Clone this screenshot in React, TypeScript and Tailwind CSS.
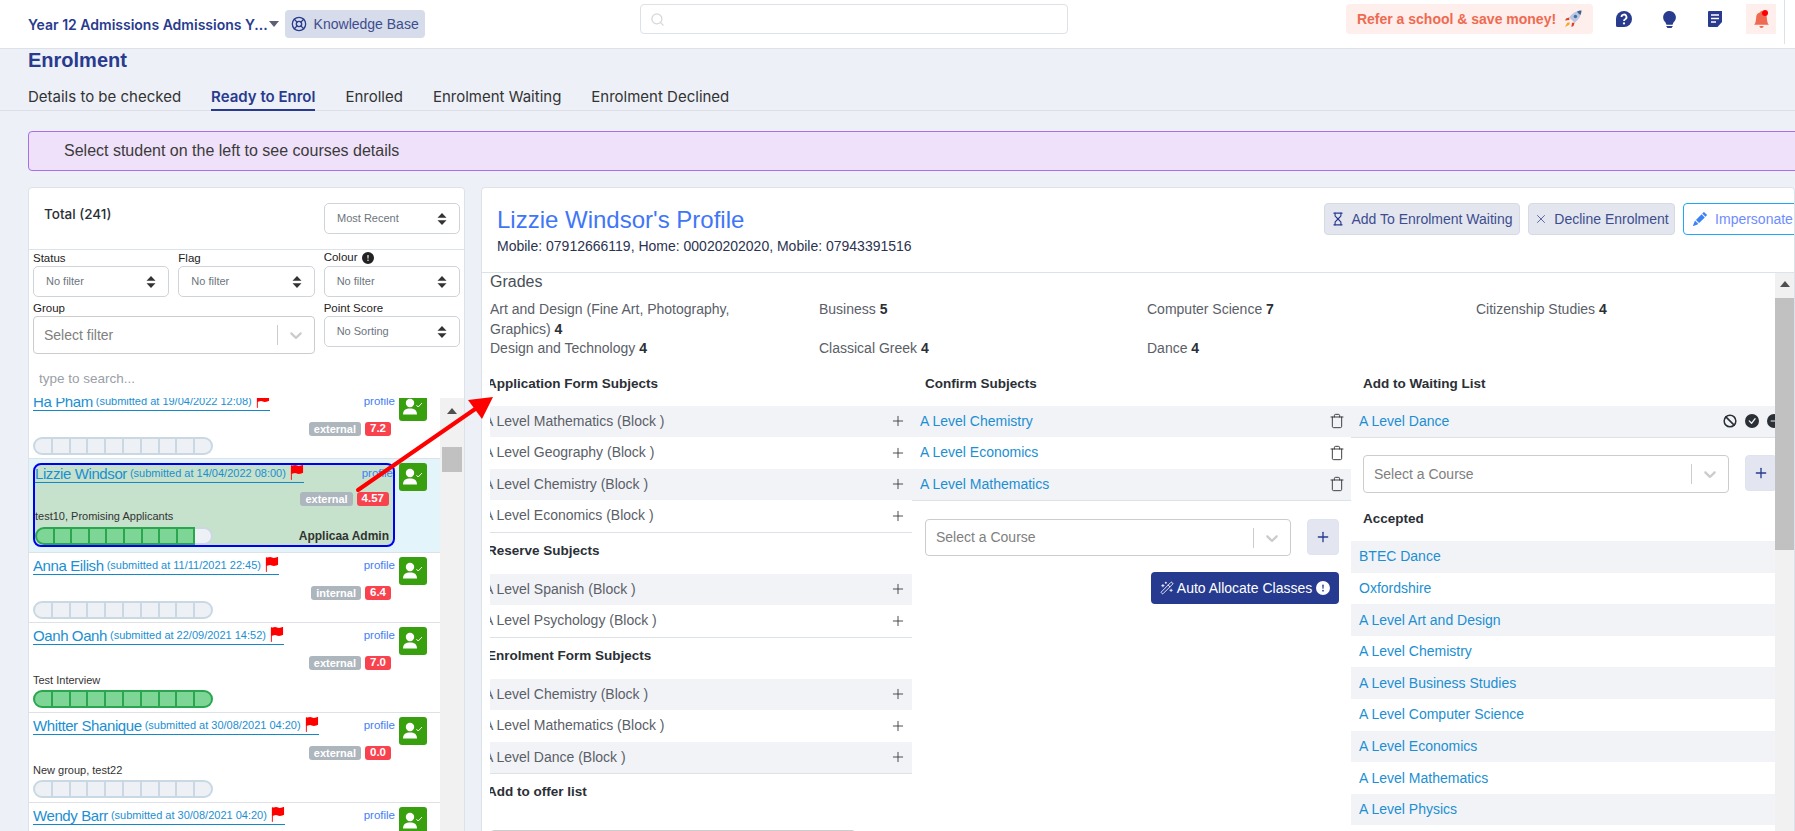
import { Ban, LifeBuoy, Plus, Search, Trash, X, Hourglass, WandSparkles } from "lucide-react";
import { BsBellFill, BsCheckCircleFill, BsDashCircleFill, BsExclamationCircleFill, BsFlagFill, BsLightbulbFill, BsPencilFill } from "react-icons/bs";

const tabs = ["Details to be checked", "Ready to Enrol", "Enrolled", "Enrolment Waiting", "Enrolment Declined"];

const students = [
  { name: "Ha Pham", date: "19/04/2022 12:08", type: "external", score: "7.2", group: "", filled: 0 },
  { name: "Lizzie Windsor", date: "14/04/2022 08:00", type: "external", score: "4.57", group: "test10, Promising Applicants", filled: 9, selected: true },
  { name: "Anna Eilish", date: "11/11/2021 22:45", type: "internal", score: "6.4", group: "", filled: 0 },
  { name: "Oanh Oanh", date: "22/09/2021 14:52", type: "external", score: "7.0", group: "Test Interview", filled: 10 },
  { name: "Whitter Shanique", date: "30/08/2021 04:20", type: "external", score: "0.0", group: "New group, test22", filled: 0 },
  { name: "Wendy Barr", date: "30/08/2021 04:20", type: "external", score: "5.1", group: "", filled: 0 },
];

const grades = [
  ["Art and Design (Fine Art, Photography, Graphics)", "4"],
  ["Business", "5"],
  ["Computer Science", "7"],
  ["Citizenship Studies", "4"],
  ["Design and Technology", "4"],
  ["Classical Greek", "4"],
  ["Dance", "4"],
];

const accepted = [
  "BTEC Dance",
  "Oxfordshire",
  "A Level Art and Design",
  "A Level Chemistry",
  "A Level Business Studies",
  "A Level Computer Science",
  "A Level Economics",
  "A Level Mathematics",
  "A Level Physics",
];

const SortIcon = () => (
  <svg width="10" height="12" viewBox="0 0 10 12" className="shrink-0 fill-[#333]">
    <path d="M5 0 L9.5 4.8 H0.5 Z M5 12 L0.5 7.2 H9.5 Z" />
  </svg>
);

const Chevron = () => (
  <svg width="20" height="20" viewBox="0 0 20 20" className="fill-[#cccccc]">
    <path d="M4.516 7.548c0.436-0.446 1.043-0.481 1.576 0l3.908 3.747 3.908-3.747c0.533-0.481 1.141-0.446 1.574 0 0.436 0.445 0.408 1.197 0 1.615-0.406 0.418-4.695 4.502-4.695 4.502-0.217 0.223-0.502 0.335-0.787 0.335s-0.57-0.112-0.789-0.335c0 0-4.287-4.084-4.695-4.502s-0.436-1.17 0-1.615z" />
  </svg>
);

const SmallSelect = ({ label }: { label: string }) => (
  <div className="flex h-[31px] items-center justify-between rounded-[5px] border border-[#ced4da] bg-white pr-[12px] pl-[12px] text-[11px] text-[#6c757d]">
    {label}
    <SortIcon />
  </div>
);

const CourseSelect = ({ placeholder, className }: { placeholder: string; className: string }) => (
  <div className={`flex items-center rounded-[4px] border border-[#cccccc] bg-white pl-[10px] text-[#808080] ${className}`}>
    <span className="flex-1">{placeholder}</span>
    <span className="h-[20px] w-px bg-[#cccccc]" />
    <span className="flex w-[36px] justify-center">
      <Chevron />
    </span>
  </div>
);

const UserCheck = () => (
  <div className="flex h-[28px] w-[28px] shrink-0 items-center justify-center rounded-[3px] bg-[#38a00e]">
    <svg width="20" height="18" viewBox="0 0 20 18" className="fill-white">
      <circle cx="7" cy="5" r="4.2" />
      <path d="M0 16.5 C0 12 3 10.5 7 10.5 C11 10.5 14 12 14 16.5 Z" />
      <path d="M13.5 7.2 L15.2 9 L19 5" fill="none" stroke="white" strokeWidth="1" />
    </svg>
  </div>
);

const ProgressBar = ({ filled, compact }: { filled: number; compact?: boolean }) => (
  <div className={`flex h-[18px] shrink-0 ${compact ? "w-[178px]" : "w-[180px]"}`}>
    {Array.from({ length: 10 }).map((_, i) => (
      <div
        key={i}
        className={`flex-1 border-y-2 border-r-2 first:rounded-l-full first:border-l-2 last:rounded-r-full ${
          i < filled ? "border-[#2aa64f] bg-[#7dd695]" : "border-[#c9d8e3] bg-[#edf1f5]"
        }`}
      />
    ))}
  </div>
);

const StudentInfo = ({ s }: { s: (typeof students)[number] }) => (
  <>
    <div className="flex h-[18px] items-start justify-between">
      <span className="flex h-[18px] items-center gap-[3px] border-b border-[#1487c9] leading-[17px] whitespace-nowrap text-[#1b8fd2]">
        <span className="text-[15px] tracking-[-0.4px]">{s.name}</span>
        <span className="text-[11px]">(submitted at {s.date})</span>
        <BsFlagFill className="mb-[3px] text-[15px] text-[#ff0000]" />
      </span>
      <span className="text-[11.5px] leading-[16px] text-[#3f80f5]">profile</span>
    </div>
    <div className={`flex justify-end gap-[4px] pr-[4px] ${s.selected ? "mt-[9px]" : "mt-[11px]"}`}>
      <span className="flex h-[14px] items-center rounded-[3px] bg-[#adb5bd] px-[5px] text-[11px] font-bold text-white">{s.type}</span>
      <span className="flex h-[14px] items-center rounded-[3px] bg-[#f8434f] px-[5px] text-[11.5px] font-bold text-white">{s.score}</span>
    </div>
    {s.group && <div className="mt-[1px] flex h-[18px] items-center text-[11px] text-[#333]">{s.group}</div>}
  </>
);

const StudentRow = ({ s }: { s: (typeof students)[number] }) => {
  if (s.selected) {
    return (
      <div className="flex gap-[4px] border-b border-[#dee2e6] bg-[#e3f4fb] pt-[4px] pr-[13px] pb-[5px] pl-[4px]">
        <div className="flex-1 rounded-[8px] border-2 border-[#0000f0] bg-[#c6e2cc]">
          <StudentInfo s={s} />
          <div className="mt-[2px] flex items-center justify-between pr-[4px]">
            <ProgressBar filled={s.filled} compact />
            <span className="text-[12px] font-bold text-[#333]">Applicaa Admin</span>
          </div>
        </div>
        <UserCheck />
      </div>
    );
  }
  return (
    <div className={`flex gap-[4px] border-b border-[#dee2e6] pt-[4px] pr-[13px] pl-[4px] ${s.group ? "pb-[4px]" : "pb-[3px]"}`}>
      <div className="flex-1">
        <StudentInfo s={s} />
        <div className="mt-[1px]">
          <ProgressBar filled={s.filled} />
        </div>
      </div>
      <UserCheck />
    </div>
  );
};

const SubjectRow = ({ name, odd }: { name: string; odd: boolean }) => (
  <div className={`flex h-[31.5px] items-center justify-between pr-[6px] text-[14px] text-[#5a6068] ${odd ? "bg-[#f2f3f7]" : "bg-white"}`}>
    <span className="-ml-[6px]">{name}</span>
    <Plus size={16} strokeWidth={1.3} className="text-[#333]" />
  </div>
);

const LinkRow = ({ name, odd, children }: { name: string; odd: boolean; children?: React.ReactNode }) => (
  <div className={`flex h-[31.6px] items-center justify-between pr-[6px] pl-[8px] text-[14px] text-[#1b8fd2] ${odd ? "bg-[#f2f3f7]" : "bg-white"}`}>
    <span>{name}</span>
    {children}
  </div>
);

const Heading = ({ children, className }: { children: string; className?: string }) => (
  <div className={`h-[41px] pt-[8px] text-[13.5px] leading-[20px] font-bold text-[#2b2f36] ${className ?? ""}`}>{children}</div>
);

const PlusButton = () => (
  <div className="flex h-[36px] w-[32px] shrink-0 items-center justify-center rounded-[4px] border border-[#dfe3ee] bg-[#e3e6f0] text-[#283b8e]">
    <Plus size={16} strokeWidth={2} />
  </div>
);

export default function App() {
  return (
    <div className="relative h-[831px] w-[1795px] overflow-hidden bg-[#edf0f7] font-['Liberation_Sans',sans-serif]">
      {/* Top Bar */}
      <header className="flex h-[49px] items-start border-b border-[#dde1e8] bg-white">
        <div className="flex h-[48px] w-[640px] items-center pl-[28px]">
          <span className="font-['Inter',sans-serif] text-[14px] font-semibold text-[#283b8e]">Year 12 Admissions Admissions Y...</span>
          <span className="mr-[6px] ml-[1px] h-0 w-0 border-x-[5px] border-t-[6px] border-x-transparent border-t-[#5b6175]" />
          <div className="flex h-[28px] items-center gap-[7px] rounded-[4px] bg-[#d6dce9] px-[6px] text-[14px] text-[#3d4d8f]">
            <LifeBuoy size={16} className="text-[#283b8e]" />
            Knowledge Base
          </div>
        </div>
        <div className="mt-[4px] flex h-[30px] w-[428px] items-center rounded-[4px] border border-[#dde1e8] pl-[9px]">
          <Search size={15} className="text-[#d3d6db]" />
        </div>
        <div className="mt-[4px] ml-[278px] flex h-[30px] w-[247px] items-center justify-center gap-[8px] rounded-[4px] bg-[#feeeec] text-[14px] font-bold text-[#ee6a50]">
          Refer a school &amp; save money!
          <svg width="18" height="18" viewBox="0 0 17 17">
            <path d="M16.5 0.5 C12 0.5 8 3 5 7 L10 12 C14 9 16.5 5 16.5 0.5 Z" fill="#b9c6de" />
            <path d="M16.5 0.5 C15 0.5 13.5 0.9 12.2 1.6 L15.4 4.8 C16.1 3.5 16.5 2 16.5 0.5 Z" fill="#3f5f8f" />
            <circle cx="10.8" cy="6.2" r="1.6" fill="#3f6fb0" />
            <path d="M5 7 L2 8 L1 10 L5 9.5 Z M10 12 L9 15 L7 16 L7.5 12 Z" fill="#d8402b" />
            <path d="M5.5 11.5 L1 16 L3 12 Z M5.5 11.5 L1 16 L5 14 Z" fill="#f5a623" />
          </svg>
        </div>
        <div className="mt-[4px] flex h-[30px] w-[46px] items-center justify-center pl-[16px] text-[#283b8e]">
          <svg width="16" height="16" viewBox="0 0 16 16">
            <path d="M8 0 A8 8 0 1 1 8 16 H1.5 Q0 16 0 14.5 V8 A8 8 0 0 1 8 0 Z" fill="#283b8e" />
            <path d="M5.5 6 A2.5 2.5 0 1 1 9.2 8.2 Q8 8.8 8 10" fill="none" stroke="white" strokeWidth="1.8" />
            <circle cx="8" cy="12.4" r="1.1" fill="white" />
          </svg>
        </div>
        <div className="mt-[4px] flex h-[30px] w-[46px] items-center justify-center pl-[14px] text-[#283b8e]">
          <BsLightbulbFill size={17} />
        </div>
        <div className="mt-[4px] flex h-[30px] w-[46px] items-center justify-center pl-[14px]">
          <svg width="14" height="16" viewBox="0 0 14 16">
            <path d="M1 0 H14 V11 L9.5 16 H1 Q0 16 0 15 V1 Q0 0 1 0 Z" fill="#283b8e" />
            <path d="M3 4 H11 M3 7.5 H11 M3 11 H8" stroke="white" strokeWidth="1.5" />
          </svg>
        </div>
        <div className="relative mt-[4px] ml-[15px] flex h-[30px] w-[30px] items-center justify-center bg-[#feeeec] text-[#ee6a50]">
          <BsBellFill size={17} />
          <span className="absolute top-[6px] left-[16px] h-[6px] w-[6px] rounded-full bg-[#ff0000]" />
        </div>
        <div className="ml-[8px] h-[44px] w-px bg-[#dde1e8]" />
      </header>

      {/* Title and tabs */}
      <h1 className="h-[23px] pl-[28px] text-[20px] leading-[23px] font-bold text-[#283b8e]">Enrolment</h1>
      <nav className="mt-[14px] flex h-[25px] gap-[30px] border-b border-[#dcdfe6] pl-[28px] font-['Inter',sans-serif] text-[15px] leading-[22px] text-[#333]">
        {tabs.map((tab) =>
          tab === "Ready to Enrol" ? (
            <span key={tab} className="h-[25px] border-b-2 border-[#283b8e] font-semibold text-[#283b8e]">{tab}</span>
          ) : (
            <span key={tab}>{tab}</span>
          ),
        )}
      </nav>

      {/* Notice */}
      <div className="mt-[20px] -mr-[10px] ml-[28px] flex h-[40px] items-center rounded-l-[4px] border border-[#a96ee8] bg-[#efe1fa] pl-[35px] text-[16px] text-[#3b3b3b]">
        Select student on the left to see courses details
      </div>

      <div className="mt-[16px] flex gap-[16px] pl-[28px]">
        {/* Left Card */}
        <aside className="h-[700px] w-[437px] shrink-0 overflow-hidden rounded-t-[4px] border border-[#dde1e8] bg-white">
          <div className="flex h-[62px] justify-between border-b border-[#dde1e8] pt-[15px] pr-[4px] pl-[15px]">
            <span className="mt-[1px] font-['Inter',sans-serif] text-[13.5px] font-medium text-[#2b2f36]">Total (241)</span>
            <div className="h-[31px] w-[136px]">
              <SmallSelect label="Most Recent" />
            </div>
          </div>
          <div className="grid grid-cols-3 gap-x-[9px] pr-[4px] pl-[4px] text-[11.5px] text-[#222]">
            <div>
              <div className="h-[16px]">Status</div>
              <SmallSelect label="No filter" />
            </div>
            <div>
              <div className="h-[16px]">Flag</div>
              <SmallSelect label="No filter" />
            </div>
            <div>
              <div className="flex h-[16px] items-center gap-[4px]">
                Colour <BsExclamationCircleFill size={12} />
              </div>
              <SmallSelect label="No filter" />
            </div>
            <div className="col-span-2 mt-[3px]">
              <div className="h-[16px]">Group</div>
              <CourseSelect placeholder="Select filter" className="h-[38px] text-[14px]" />
            </div>
            <div className="mt-[3px]">
              <div className="h-[16px]">Point Score</div>
              <SmallSelect label="No Sorting" />
            </div>
          </div>
          <div className="flex h-[44px] items-center pt-[6px] pl-[10px] text-[13.5px] text-[#9aa0a6]">type to search...</div>
          <div className="flex h-[440px]">
            <div className="w-[411px] overflow-hidden">
              <div className="-mt-[9px]">
                {students.map((s) => (
                  <StudentRow key={s.name} s={s} />
                ))}
              </div>
            </div>
            <div className="flex-1 bg-[#f1f1f1] px-[2px]">
              <div className="mx-auto mt-[10px] h-0 w-0 border-x-[5px] border-b-[6px] border-x-transparent border-b-[#505050]" />
              <div className="mt-[33px] h-[25px] bg-[#c1c1c1]" />
            </div>
          </div>
        </aside>

        {/* Profile Card */}
        <main className="h-[700px] flex-1 overflow-hidden rounded-t-[4px] border border-[#dde1e8] bg-white">
          <div className="flex h-[85px] items-start justify-between border-b border-[#dde1e8] pt-[15px] pl-[15px]">
            <div>
              <div className="pt-[3px] text-[24px] leading-[28px] text-[#3f76f8]">Lizzie Windsor's Profile</div>
              <div className="mt-[4px] text-[14px] leading-[16px] text-[#2b3350]">Mobile: 07912666119, Home: 00020202020, Mobile: 07943391516</div>
            </div>
            <div className="-mr-[9px] flex gap-[8px] text-[14px]">
              <div className="flex h-[32px] w-[196px] items-center justify-center gap-[6px] rounded-[4px] border border-[#d5dae5] bg-[#e3e6ee] text-[#3d4d8f]">
                <Hourglass size={14} className="text-[#283b8e]" />
                Add To Enrolment Waiting
              </div>
              <div className="flex h-[32px] w-[147px] items-center justify-center gap-[6px] rounded-[4px] border border-[#d5dae5] bg-[#e3e6ee] text-[#3d4d8f]">
                <X size={14} strokeWidth={1.4} />
                Decline Enrolment
              </div>
              <div className="flex h-[32px] w-[120px] items-center justify-center gap-[8px] rounded-[4px] border border-[#1ea7fd] bg-white text-[#6f8cff]">
                <BsPencilFill size={14} className="text-[#3b82f6]" />
                Impersonate
              </div>
            </div>
          </div>

          <div className="flex h-[560px]">
            <div className="w-[1293px] shrink-0 pl-[8px]">
              <div className="h-[18px] text-[16px] leading-[18px] text-[#495057]">Grades</div>
              <div className="mt-[9px] grid grid-cols-[329px_328px_329px_300px] text-[14px] leading-[19.5px] text-[#5a6068]">
                {grades.map(([name, score]) => (
                  <div key={name} className="pr-[40px]">
                    {name} <b className="text-[#2b2f36]">{score}</b>
                  </div>
                ))}
              </div>

              <div className="mt-[6px] flex">
                {/* Application subjects */}
                <div className="w-[422px] shrink-0 overflow-hidden">
                  <Heading className="-ml-[3px] pt-[9px]">Application Form Subjects</Heading>
                  {["A Level Mathematics (Block )", "A Level Geography (Block )", "A Level Chemistry (Block )", "A Level Economics (Block )"].map((name, i) => (
                    <SubjectRow key={name} name={name} odd={i % 2 === 0} />
                  ))}
                  <div className="h-px bg-[#dde1e8]" />
                  <Heading className="-ml-[3px]">Reserve Subjects</Heading>
                  {["A Level Spanish (Block )", "A Level Psychology (Block )"].map((name, i) => (
                    <SubjectRow key={name} name={name} odd={i % 2 === 0} />
                  ))}
                  <div className="h-px bg-[#dde1e8]" />
                  <Heading className="-ml-[3px]">Enrolment Form Subjects</Heading>
                  {["A Level Chemistry (Block )", "A Level Mathematics (Block )", "A Level Dance (Block )"].map((name, i) => (
                    <SubjectRow key={name} name={name} odd={i % 2 === 0} />
                  ))}
                  <div className="h-px bg-[#dde1e8]" />
                  <Heading className="-ml-[3px]">Add to offer list</Heading>
                  <div className="mt-[15px]">
                    <CourseSelect placeholder="Select a Course" className="h-[37px] w-[366px] text-[14px]" />
                  </div>
                </div>

                {/* Confirm subjects */}
                <div className="w-[439px] shrink-0">
                  <Heading className="pt-[9px] pl-[13px]">Confirm Subjects</Heading>
                  {["A Level Chemistry", "A Level Economics", "A Level Mathematics"].map((name, i) => (
                    <LinkRow key={name} name={name} odd={i % 2 === 0}>
                      <Trash size={16} strokeWidth={1.4} className="text-[#333]" />
                    </LinkRow>
                  ))}
                  <div className="h-px bg-[#dde1e8]" />
                  <div className="mt-[18px] flex gap-[16px] pl-[13px]">
                    <CourseSelect placeholder="Select a Course" className="h-[37px] w-[366px] text-[14px]" />
                    <PlusButton />
                  </div>
                  <div className="mt-[16px] flex justify-end pr-[12px]">
                    <div className="flex h-[32px] w-[188px] items-center justify-center gap-[3px] rounded-[4px] bg-[#263a8f] text-[14px] text-white">
                      <WandSparkles size={14} strokeWidth={1.5} />
                      Auto Allocate Classes
                      <BsExclamationCircleFill size={14} className="ml-[1px]" />
                    </div>
                  </div>
                </div>

                {/* Waiting list */}
                <div className="w-[424px] shrink-0">
                  <Heading className="pt-[9px] pl-[12px]">Add to Waiting List</Heading>
                  <LinkRow name="A Level Dance" odd>
                    <span className="-mr-[12px] flex w-[58px] items-center gap-[8px] overflow-hidden text-[#2b2f36]">
                      <Ban size={14} strokeWidth={2.6} className="shrink-0" />
                      <BsCheckCircleFill size={14} className="shrink-0" />
                      <BsDashCircleFill size={14} className="shrink-0" />
                    </span>
                  </LinkRow>
                  <div className="h-px bg-[#dde1e8]" />
                  <div className="mt-[17px] flex gap-[16px] overflow-hidden pl-[12px]">
                    <CourseSelect placeholder="Select a Course" className="h-[38px] w-[366px] shrink-0 text-[14px]" />
                    <PlusButton />
                  </div>
                  <Heading className="mt-[7px] pt-[9px] pl-[12px]">Accepted</Heading>
                  {accepted.map((name, i) => (
                    <LinkRow key={name} name={name} odd={i % 2 === 0} />
                  ))}
                </div>
              </div>
            </div>

            {/* Scrollbar */}
            <div className="relative w-[20px] shrink-0 bg-[#f1f1f1]">
              <div className="mx-auto mt-[8px] h-0 w-0 border-x-[5px] border-b-[6px] border-x-transparent border-b-[#505050]" />
              <div className="mt-[11px] h-[252px] bg-[#c1c1c1]" />
            </div>
          </div>
        </main>
      </div>

      {/* Annotation arrow */}
      <svg className="pointer-events-none absolute inset-0" width="1795" height="831">
        <path d="M358 490 L478 407" stroke="#ff0000" strokeWidth="4" strokeLinecap="round" />
        <path d="M493 397 L468 400 L482 419 Z" fill="#ff0000" />
      </svg>
    </div>
  );
}
